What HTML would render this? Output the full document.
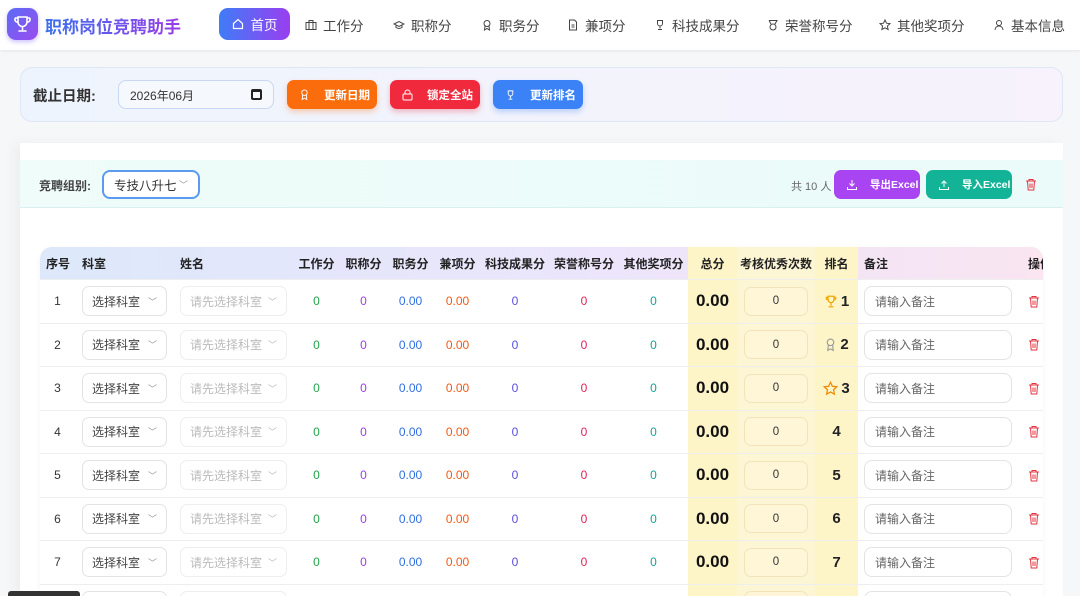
<!DOCTYPE html>
<html><head><meta charset="utf-8"><style>
*{box-sizing:border-box;margin:0;padding:0}
html,body{width:1080px;height:596px;overflow:hidden}
body{background:#f6f7f9;font-family:"Liberation Sans","Noto Sans CJK SC",sans-serif;color:#333;position:relative;white-space:nowrap}
.nav{position:absolute;left:0;top:0;width:1080px;height:50px;background:#fff;box-shadow:0 1px 3px rgba(0,0,0,.08)}
.logo{position:absolute;left:7px;top:8px;width:31px;height:32px;border-radius:9px;background:linear-gradient(135deg,#5b6cf5,#9b4cf0);box-shadow:0 2px 5px rgba(100,80,240,.35)}
.brand{position:absolute;left:45px;top:13px;font-size:17px;font-weight:bold;background:linear-gradient(90deg,#3b6ff0,#9b3ce8);-webkit-background-clip:text;color:transparent}
.ni{position:absolute;top:15px;font-size:13.5px;color:#444;display:flex;align-items:center;gap:6px}
.ni svg{width:12px;height:12px}
.home{position:absolute;left:219px;top:8px;width:71px;height:32px;border-radius:9px;background:linear-gradient(90deg,#3f7cf6,#9a3ef0);color:#fff;font-size:13.5px;display:flex;align-items:center;justify-content:center;gap:7px}
.card1{position:absolute;left:20px;top:67px;width:1043px;height:55px;border-radius:12px;border:1px solid #dfe6f6;background:linear-gradient(90deg,#eef4fd,#f7f2fc)}
.lab{position:absolute;left:33px;top:85px;font-size:14.5px;font-weight:bold;color:#333}
.date{position:absolute;left:118px;top:80px;width:156px;height:29px;border:1px solid #c8d8f0;border-radius:8px;background:#f5f8fd;font-size:12px;padding:6px 11px}
.btn{position:absolute;height:29px;border-radius:7px;color:#fff;font-size:11.5px;font-weight:bold;display:flex;align-items:center;gap:14px;padding-left:12px}
.card2{position:absolute;left:20px;top:143px;width:1043px;height:453px;background:#fff;box-shadow:-6px 0 12px rgba(0,0,0,.04)}
.band{position:absolute;left:20px;top:160px;width:1043px;height:48px;background:linear-gradient(90deg,#effcf9,#eafbfa);border-bottom:1px solid #d9f1ee}
.tbl{position:absolute;left:40px;top:247px;width:1003px;height:349px;overflow:hidden;border-radius:12px 12px 0 0;background:#fff;box-shadow:0 2px 6px rgba(0,0,0,.05)}
.row{position:absolute;left:0;width:1040px;height:43.5px;display:flex;align-items:center;border-bottom:1px solid #eee;font-size:12px}
.row>div{flex:none;height:100%;display:flex;align-items:center;justify-content:center}
.hd{top:0;height:33px;background:linear-gradient(90deg,#dde8fb,#ece5fb 55%,#fbe5f0);font-weight:bold;color:#222;font-size:12px}
.sel{border:1px solid #e3e3e3;border-radius:7px;height:30px;display:flex;align-items:center;justify-content:space-between;padding:0 9px;font-size:12px;white-space:nowrap;overflow:hidden}
.y1{background:#fdf4c8}.y2{background:#fdf6d5}
.tot{font-size:17px;font-weight:bold;color:#111}
.in{width:64px;height:29px;border:1px solid #f2e4b8;border-radius:7px;background:#fff6d8;display:flex;align-items:center;justify-content:center;font-size:11.5px}
.note{width:148px;height:30px;border:1px solid #e3e3e3;border-radius:8px;background:#fff;color:#666;font-size:12px;padding:0 10px;display:flex;align-items:center}
.rk{font-size:15px;font-weight:bold;color:#222}
.r>div:nth-child(1){width:35px}
.r>div:nth-child(2){width:99px}
.r>div:nth-child(3){width:119px}
.r>div:nth-child(4),.r>div:nth-child(5),.r>div:nth-child(6),.r>div:nth-child(7){width:47px}
.r>div:nth-child(8){width:68px}.r>div:nth-child(9){width:70px}.r>div:nth-child(10){width:69px}
.r>div:nth-child(11){width:49px}.r>div:nth-child(12){width:78px}.r>div:nth-child(13){width:43px}
.r>div:nth-child(14){width:162px}.r>div:nth-child(15){width:40px;justify-content:flex-start;padding-left:8px}
</style></head><body>
<div class="nav">
<div class="logo"><svg width="31" height="32" viewBox="0 0 31 32"><path d="M11 9h9v5a4.5 4.5 0 0 1-9 0zM11 10H8.5a2.5 2.5 0 0 0 2.5 4M20 10h2.5a2.5 2.5 0 0 1-2.5 4M15.5 18.5v3M12 23h7" stroke="#fff" stroke-width="1.6" fill="none" stroke-linecap="round"/></svg></div>
<div class="brand">职称岗位竞聘助手</div>
<div class="home"><svg width="12" height="12" viewBox="0 0 12 12"><path d="M1.5 5.5L6 1.5l4.5 4V10.5h-9z" stroke="#fff" stroke-width="1.2" fill="none"/></svg>首页</div>
<div class="ni" style="left:305px"><svg viewBox="0 0 12 12"><rect x="1" y="3.5" width="10" height="7" stroke="#444" fill="none"/><path d="M4 3.5V1.5h4v2M4 3.5v7M8 3.5v7" stroke="#444" fill="none"/></svg>工作分</div>
<div class="ni" style="left:393px"><svg viewBox="0 0 12 12"><path d="M1 5l5-2.5L11 5 6 7.5zM3 6v2.5c2 1.3 4 1.3 6 0V6" stroke="#444" fill="none"/></svg>职称分</div>
<div class="ni" style="left:481px"><svg viewBox="0 0 12 12"><circle cx="6" cy="4.5" r="3" stroke="#444" fill="none"/><path d="M4 7l-.5 4L6 9.5 8.5 11 8 7" stroke="#444" fill="none"/></svg>职务分</div>
<div class="ni" style="left:567px"><svg viewBox="0 0 12 12"><path d="M2.5 1h5l2 2v8h-7zM4.5 6h3M4.5 8h3" stroke="#444" fill="none"/></svg>兼项分</div>
<div class="ni" style="left:654px"><svg viewBox="0 0 12 12"><path d="M3.5 1.5h5v3a2.5 2.5 0 0 1-5 0zM6 7v2.5M4 10.5h4" stroke="#444" fill="none"/></svg>科技成果分</div>
<div class="ni" style="left:767px"><svg viewBox="0 0 12 12"><path d="M2 1.5h8L8 5M4 5L2 1.5" stroke="#444" fill="none"/><circle cx="6" cy="8" r="3" stroke="#444" fill="none"/></svg>荣誉称号分</div>
<div class="ni" style="left:879px"><svg viewBox="0 0 12 12"><path d="M6 1l1.5 3.2 3.5.4-2.6 2.4.7 3.5L6 8.8 2.9 10.5l.7-3.5L1 4.6l3.5-.4z" stroke="#444" fill="none"/></svg>其他奖项分</div>
<div class="ni" style="left:993px"><svg viewBox="0 0 12 12"><circle cx="6" cy="4" r="2.5" stroke="#444" fill="none"/><path d="M2 11c0-2.5 2-4 4-4s4 1.5 4 4" stroke="#444" fill="none"/></svg>基本信息</div>
</div>

<div class="card1"></div>
<div class="lab">截止日期:</div>
<div class="date">2026年06月<span style="position:absolute;right:11px;top:8px;width:11px;height:11px;border:2px solid #222;border-top-width:3px;border-radius:2px"></span></div>
<div class="btn" style="left:287px;top:80px;width:90px;background:#fb6d0c;box-shadow:0 3px 6px rgba(251,109,12,.3)"><svg width="11" height="13" viewBox="0 0 12 13"><circle cx="6" cy="4.5" r="3" stroke="#fff" fill="none"/><path d="M4 7l-.5 5L6 10.5 8.5 12 8 7" stroke="#fff" fill="none"/></svg>更新日期</div>
<div class="btn" style="left:390px;top:80px;width:90px;background:#f02a3c;box-shadow:0 3px 6px rgba(240,42,60,.3)"><svg width="11" height="12" viewBox="0 0 11 12"><rect x="1" y="5" width="9" height="6" rx="1" stroke="#fff" fill="none"/><path d="M3 5V3.5a2.5 2.5 0 0 1 5 0V5" stroke="#fff" fill="none"/></svg>锁定全站</div>
<div class="btn" style="left:493px;top:80px;width:90px;background:#3a82f6;box-shadow:0 3px 6px rgba(58,130,246,.3)"><svg width="11" height="12" viewBox="0 0 12 12"><path d="M3.5 1.5h5v3a2.5 2.5 0 0 1-5 0zM6 7v2.5M4 10.5h4" stroke="#fff" fill="none"/></svg>更新排名</div>

<div class="card2"></div>
<div class="band"></div>
<div style="position:absolute;left:39px;top:177px;font-size:12px;font-weight:bold;color:#444">竞聘组别:</div>
<div class="sel" style="position:absolute;left:102px;top:170px;width:98px;height:29px;border:2px solid #5b9af0;border-radius:8px;background:#fff;font-size:12.5px;color:#333;padding:0 10px">专技八升七<span style="color:#999;font-size:9px">﹀</span></div>
<div style="position:absolute;left:791px;top:178px;font-size:11px;color:#666">共 10 人</div>
<div class="btn" style="left:834px;top:170px;width:86px;height:29px;background:#a944f2;font-size:10.5px;gap:12px"><svg width="12" height="12" viewBox="0 0 12 12"><path d="M6 1v6M3.5 4.5L6 7l2.5-2.5M1.5 8v2.5h9V8" stroke="#fff" fill="none"/></svg>导出Excel</div>
<div class="btn" style="left:926px;top:170px;width:86px;height:29px;background:#13b397;font-size:10.5px;gap:12px"><svg width="12" height="12" viewBox="0 0 12 12"><path d="M6 8V2M3.5 4.5L6 2l2.5 2.5M1.5 8v2.5h9V8" stroke="#fff" fill="none"/></svg>导入Excel</div>
<svg style="position:absolute;left:1025px;top:178px" width="12" height="13" viewBox="0 0 12 13"><path d="M1 3h10M4 3V1.5h4V3M2.5 3l.7 9h5.6l.7-9M5 5.5v4.5M7 5.5v4.5" stroke="#e5323f" fill="none"/></svg>

<div class="tbl">
<div class="row hd">
<div style="width:35px;justify-content:flex-start;padding-left:6px">序号</div>
<div style="width:99px;justify-content:flex-start;padding-left:7px">科室</div>
<div style="width:119px;justify-content:flex-start;padding-left:6px">姓名</div>
<div style="width:47px">工作分</div><div style="width:47px">职称分</div><div style="width:47px">职务分</div><div style="width:47px">兼项分</div>
<div style="width:68px">科技成果分</div><div style="width:70px">荣誉称号分</div><div style="width:69px">其他奖项分</div>
<div class="y1" style="width:49px">总分</div><div class="y2" style="width:78px">考核优秀次数</div><div class="y1" style="width:43px">排名</div>
<div style="width:162px;justify-content:flex-start;padding-left:6px">备注</div><div style="width:40px;justify-content:flex-start;padding-left:8px">操作</div>
</div>
</div>
<div id="rows"></div>
<script>
var h='',ic=['<svg width="14" height="15" viewBox="0 0 12 12"><path d="M3.5 1.5h5v3a2.5 2.5 0 0 1-5 0zM3.5 2.5H2a1.5 1.5 0 0 0 1.5 2M8.5 2.5H10a1.5 1.5 0 0 1-1.5 2M6 7v2.5M4 10.5h4" stroke="#f0a800" stroke-width="1.1" fill="none"/></svg>','<svg width="13" height="15" viewBox="0 0 12 13"><circle cx="6" cy="4.5" r="3" stroke="#999" fill="none"/><path d="M4 7l-.5 5L6 10.5 8.5 12 8 7" stroke="#999" fill="none"/></svg>','<svg width="15" height="15" viewBox="0 0 12 12"><path d="M6 1l1.5 3.2 3.5.4-2.6 2.4.7 3.5L6 8.8 2.9 10.5l.7-3.5L1 4.6l3.5-.4z" stroke="#f08a00" fill="none"/></svg>'];
for(var i=0;i<8;i++){var t=33+i*43.5;
h+='<div class="row r" style="top:'+t+'px"><div>'+(i+1)+'</div><div style="justify-content:flex-start;padding-left:7px"><div class="sel" style="width:85px;color:#444">选择科室<span style="color:#999;font-size:9px">﹀</span></div></div><div style="justify-content:flex-start;padding-left:6px"><div class="sel" style="width:107px;color:#bbb;border-color:#eee">请先选择科室<span style="font-size:9px">﹀</span></div></div><div style="color:#22a34a">0</div><div style="color:#a03ae6">0</div><div style="color:#2f6fe0">0.00</div><div style="color:#ee5a14">0.00</div><div style="color:#5a4ee0">0</div><div style="color:#e0245a">0</div><div style="color:#10a39a">0</div><div class="y1 tot">0.00</div><div class="y2"><div class="in">0</div></div><div class="y1 rk" style="gap:3px">'+(i<3?ic[i]:'')+(i+1)+'</div><div style="justify-content:flex-start;padding-left:6px"><div class="note">请输入备注</div></div><div><svg width="12" height="13" viewBox="0 0 12 13"><path d="M1 3h10M4 3V1.5h4V3M2.5 3l.7 9h5.6l.7-9M5 5.5v4.5M7 5.5v4.5" stroke="#e5323f" fill="none"/></svg></div></div>';}
document.getElementById('rows').innerHTML=h;
var tb=document.querySelector('.tbl');document.querySelectorAll('#rows .row').forEach(function(r){tb.appendChild(r)});
</script>
<div style="position:absolute;left:8px;top:591px;width:72px;height:5px;background:#333;border-radius:3px 3px 0 0"></div>
</body></html>
